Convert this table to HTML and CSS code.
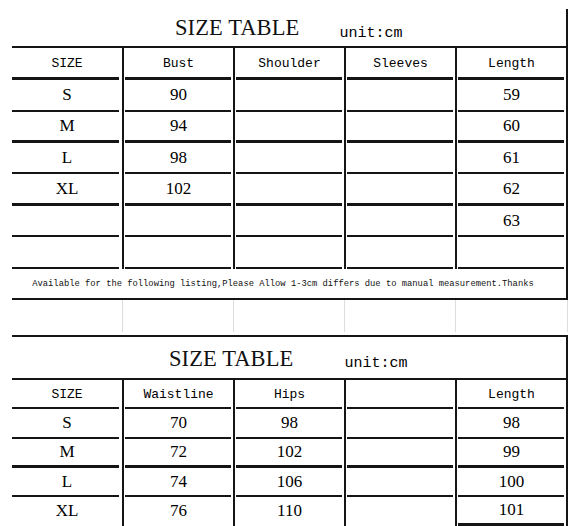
FILE: index.html
```html
<!DOCTYPE html>
<html>
<head>
<meta charset="utf-8">
<link rel="stylesheet" href="styles.css">
</head>
<body>
<div class="sheet">
  <section class="tbl t1">
    <div class="title">
      <span class="big">SIZE TABLE</span>
      <span class="unit">unit:cm</span>
    </div>
    <div class="grid">
      <div class="c lbl r-h thick">SIZE</div>
      <div class="c lbl r-h thick vl">Bust</div>
      <div class="c lbl r-h thick vl">Shoulder</div>
      <div class="c lbl r-h thick vl">Sleeves</div>
      <div class="c lbl r-h thick vl">Length</div>

      <div class="c num r32">S</div>
      <div class="c num r32 vl">90</div>
      <div class="c num r32 vl"></div>
      <div class="c num r32 vl"></div>
      <div class="c num r32 vl">59</div>

      <div class="c num r31 thick">M</div>
      <div class="c num r31 thick vl">94</div>
      <div class="c num r31 thick vl"></div>
      <div class="c num r31 thick vl"></div>
      <div class="c num r31 thick vl">60</div>

      <div class="c num r31">L</div>
      <div class="c num r31 vl">98</div>
      <div class="c num r31 vl"></div>
      <div class="c num r31 vl"></div>
      <div class="c num r31 vl">61</div>

      <div class="c num r32 thick">XL</div>
      <div class="c num r32 thick vl">102</div>
      <div class="c num r32 thick vl"></div>
      <div class="c num r32 thick vl"></div>
      <div class="c num r32 thick vl">62</div>

      <div class="c num r31"></div>
      <div class="c num r31 vl"></div>
      <div class="c num r31 vl"></div>
      <div class="c num r31 vl"></div>
      <div class="c num r31 vl">63</div>

      <div class="c num r32"></div>
      <div class="c num r32 vl"></div>
      <div class="c num r32 vl"></div>
      <div class="c num r32 vl"></div>
      <div class="c num r32 vl"></div>
    </div>
    <div class="note">Available for the following listing,Please Allow 1-3cm differs due to manual measurement.Thanks</div>
  </section>

  <div class="gap">
    <div class="g"></div>
    <div class="g fl"></div>
    <div class="g fl"></div>
    <div class="g fl"></div>
    <div class="g fl fr"></div>
  </div>

  <section class="tbl t2">
    <div class="title">
      <span class="big">SIZE TABLE</span>
      <span class="unit">unit:cm</span>
    </div>
    <div class="grid">
      <div class="c lbl r29">SIZE</div>
      <div class="c lbl r29 vl">Waistline</div>
      <div class="c lbl r29 vl">Hips</div>
      <div class="c lbl r29 vl"></div>
      <div class="c lbl r29 vl">Length</div>

      <div class="c num r30">S</div>
      <div class="c num r30 vl">70</div>
      <div class="c num r30 vl">98</div>
      <div class="c num r30 vl"></div>
      <div class="c num r30 vl">98</div>

      <div class="c num r29 thick">M</div>
      <div class="c num r29 thick vl">72</div>
      <div class="c num r29 thick vl">102</div>
      <div class="c num r29 thick vl"></div>
      <div class="c num r29 thick vl">99</div>

      <div class="c num r29">L</div>
      <div class="c num r29 vl">74</div>
      <div class="c num r29 vl">106</div>
      <div class="c num r29 vl"></div>
      <div class="c num r29 vl">100</div>

      <div class="c num r29 noline">XL</div>
      <div class="c num r29 noline vl">76</div>
      <div class="c num r29 noline vl">110</div>
      <div class="c num r29 noline vl"></div>
      <div class="c num r29 thick vl">101</div>
    </div>
  </section>
</div>
</body>
</html>
```
FILE: styles.css
```css
html, body {
  margin: 0;
  padding: 0;
  background: #ffffff;
}

.sheet {
  padding: 9px 0 0 12px;
  width: 556px;
  color: #111111;
}

.tbl {
  box-sizing: border-box;
  width: 556px;
  border-right: 2px solid #151515;
}

.title {
  box-sizing: border-box;
  display: flex;
  align-items: flex-start;
  border-bottom: 2px solid #151515;
}

.big {
  font-family: "Liberation Serif", "Times New Roman", serif;
  font-size: 22.5px;
  line-height: 26px;
  letter-spacing: 0.1px;
}

.unit {
  font-family: "Liberation Mono", "Courier New", monospace;
  font-size: 15px;
  line-height: 17px;
  color: #000000;
}

.t1 .title {
  height: 39px;
  padding-left: 163px;
}
.t1 .big { margin-top: 6px; }
.t1 .unit { margin-top: 16px; margin-left: 40px; }

.t2 {
  border-top: 2px solid #151515;
}
.t2 .title {
  height: 43px;
  padding-left: 157px;
}
.t2 .big { margin-top: 9px; }
.t2 .unit { margin-top: 18px; margin-left: 51px; }

.grid {
  display: grid;
  grid-template-columns: 110px 111px 111px 111px 111px;
}

.c {
  --lw: 2px;
  box-sizing: border-box;
  display: flex;
  align-items: center;
  justify-content: center;
  padding-bottom: var(--lw);
  background-image: linear-gradient(#151515, #151515);
  background-repeat: no-repeat;
  background-position: 0 100%;
  background-size: calc(100% - 3px) var(--lw);
}
.c.vl {
  border-left: 2px solid #151515;
  background-position: 1px 100%;
}
.c.thick { --lw: 3px; }
.c.noline { background-image: none; }

.r-h { height: 32px; }
.r32 { height: 32px; }
.r31 { height: 31px; }
.r30 { height: 30px; }
.r29 { height: 29px; }

.lbl {
  font-family: "Liberation Mono", "Courier New", monospace;
  font-size: 13px;
  color: #000000;
  padding-top: 2px;
}

.num {
  font-family: "Liberation Serif", "Times New Roman", serif;
  font-size: 17px;
  color: #000000;
}

.note {
  box-sizing: border-box;
  height: 31px;
  display: flex;
  align-items: center;
  justify-content: center;
  border-bottom: 2px solid #151515;
  font-family: "Liberation Mono", "Courier New", monospace;
  font-size: 8.8px;
  color: #111111;
  padding-right: 12px;
  padding-top: 1px;
}

.gap {
  display: grid;
  grid-template-columns: 110px 111px 111px 111px 113px;
  height: 35px;
}
.g {
  box-sizing: border-box;
  margin-bottom: 3px;
}
.g.fl { border-left: 1px solid #dddddd; }
.g.fr { border-right: 1px solid #dddddd; }
```
